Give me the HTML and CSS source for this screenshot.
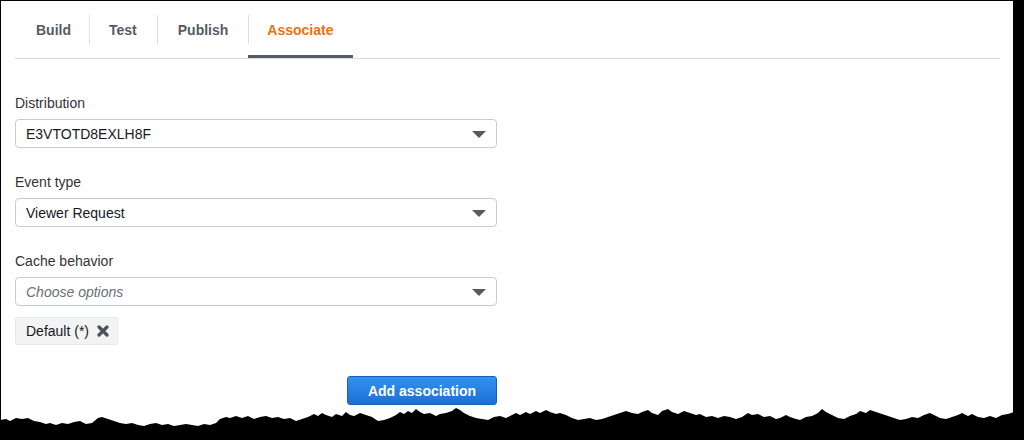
FILE: index.html
```html
<!DOCTYPE html>
<html lang="en">
<head>
<meta charset="utf-8">
<title>Associate</title>
<link rel="stylesheet" href="styles.css">
</head>
<body>
<div class="paper">
  <nav class="tabs">
    <div class="tab first">Build</div>
    <div class="tab sep second">Test</div>
    <div class="tab sep">Publish</div>
    <div class="tab sep active">Associate</div>
  </nav>
  <form class="form">
    <div class="field">
      <div class="label">Distribution</div>
      <div class="select"><span class="value">E3VTOTD8EXLH8F</span><span class="caret"></span></div>
    </div>
    <div class="field">
      <div class="label">Event type</div>
      <div class="select"><span class="value">Viewer Request</span><span class="caret"></span></div>
    </div>
    <div class="field">
      <div class="label">Cache behavior</div>
      <div class="select"><span class="value placeholder">Choose options</span><span class="caret"></span></div>
      <div class="token">
        <span>Default (*)</span>
        <svg class="x" width="12" height="12" viewBox="0 0 12 12"><path d="M2 2 L10 10 M10 2 L2 10" stroke="#4b525a" stroke-width="3.2" stroke-linecap="round"/></svg>
      </div>
    </div>
    <div class="actions">
      <button type="button" class="btn">Add association</button>
    </div>
  </form>
</div>
<svg class="torn" width="1024" height="40" viewBox="0 400 1024 40" preserveAspectRatio="none">
  <polygon fill="#000" points="0,420 6,419 10,421 16,418 22,419 28,418 34,421 40,422 46,424 50,423 56,425 62,423 68,424 74,422 80,421 86,424 92,423 98,418 102,417 108,419 114,421 120,423 126,424 132,423 138,425 144,426 150,424 156,423 162,425 168,424 174,426 180,425 186,424 192,425 198,426 204,424 210,425 216,423 220,419 226,417 230,418 236,416 242,418 248,416 254,419 260,417 266,416 272,418 278,417 284,419 290,418 296,421 302,419 308,417 314,414 318,416 322,413 326,415 332,417 336,414 342,416 346,412 350,415 354,416 360,413 366,415 372,417 378,421 384,420 390,418 396,415 400,412 404,414 408,411 412,413 416,409 420,412 424,414 430,413 436,416 440,414 446,413 452,411 456,408 460,410 464,413 470,416 476,418 482,419 488,420 494,417 500,416 506,418 512,415 516,413 520,415 526,412 530,414 536,411 540,413 546,410 550,412 556,414 560,413 566,415 572,418 578,420 584,419 590,418 596,420 602,419 608,417 614,415 620,413 626,411 632,413 638,414 642,412 648,410 652,413 658,415 662,411 668,409 672,412 678,414 684,411 690,413 696,415 700,414 706,417 712,416 718,418 724,416 730,417 736,419 742,417 748,413 752,415 758,414 764,417 770,416 776,419 780,418 786,415 790,417 796,419 800,420 806,417 812,416 818,413 822,409 826,412 832,415 838,418 844,419 850,416 856,414 860,411 866,413 870,410 876,412 882,414 888,416 894,418 900,420 906,419 912,417 918,418 924,415 930,413 936,416 940,418 946,419 952,417 958,415 962,413 968,416 972,414 978,417 984,418 990,416 996,418 1002,415 1008,414 1014,412 1024,412 1024,440 0,440"/>
</svg>
</body>
</html>
```

FILE: styles.css
```css
* { box-sizing: border-box; }

html, body {
  margin: 0;
  padding: 0;
  background: #000;
  overflow: hidden;
}

body {
  position: relative;
  width: 1024px;
  height: 440px;
  font-family: "Liberation Sans", Arial, Helvetica, sans-serif;
  font-size: 14px;
  color: #333;
}

.paper {
  margin: 1px 0 0 1px;
  width: 1012px;
  height: 439px;
  background: #fff;
  padding: 14px 13px 0 14px;
}

.tabs {
  display: flex;
  border-bottom: 1px solid #d5dbdb;
}

.tab {
  position: relative;
  height: 43px;
  padding: 0 20px 0 21px;
  line-height: 31px;
  font-weight: bold;
  color: #545b64;
}

.tab.first { padding-right: 18px; }
.tab.second { padding-left: 20px; }

.tab.sep::before {
  content: "";
  position: absolute;
  left: 0;
  top: 0;
  width: 1px;
  height: 29px;
  background: #dde1e2;
}

.tab.active {
  color: #ec7211;
  padding: 0 20px 0 19px;
}

.tab.active::after {
  content: "";
  position: absolute;
  left: 0;
  right: 0;
  bottom: 0;
  height: 3px;
  background: #545b64;
}

.form {
  margin-top: 34px;
  display: flex;
  flex-direction: column;
  gap: 24px;
  width: 482px;
}

.field {
  display: flex;
  flex-direction: column;
}

.label {
  line-height: 20px;
  color: #333;
  margin-bottom: 6px;
}

.select {
  height: 29px;
  border: 1px solid #c6cccd;
  border-radius: 4px;
  display: flex;
  align-items: center;
  justify-content: space-between;
  padding: 0 10px 0 10px;
  background: #fff;
}

.value {
  color: #16191f;
  line-height: 20px;
}

.value.placeholder {
  color: #687078;
  font-style: italic;
}

.caret {
  width: 0;
  height: 0;
  border-left: 7px solid transparent;
  border-right: 7px solid transparent;
  border-top: 7px solid #545b64;
  margin-top: 1px;
}

.token {
  margin-top: 11px;
  align-self: flex-start;
  height: 28px;
  display: flex;
  align-items: center;
  gap: 8px;
  padding: 0 8px 0 10px;
  background: #f2f3f3;
  border: 1px solid #e6e9e9;
  border-radius: 2px;
  color: #16191f;
}

.x { display: block; }

.actions {
  display: flex;
  justify-content: flex-end;
  margin-top: 7px;
}

.btn {
  width: 150px;
  height: 29px;
  border: 1px solid #1a5fb4;
  border-radius: 3px;
  background: linear-gradient(#3392f0, #1c6fd3);
  color: #fff;
  font-family: "Liberation Sans", Arial, Helvetica, sans-serif;
  font-size: 14px;
  font-weight: bold;
  padding: 0;
}

.torn {
  position: absolute;
  left: 0;
  top: 400px;
  display: block;
}
```
